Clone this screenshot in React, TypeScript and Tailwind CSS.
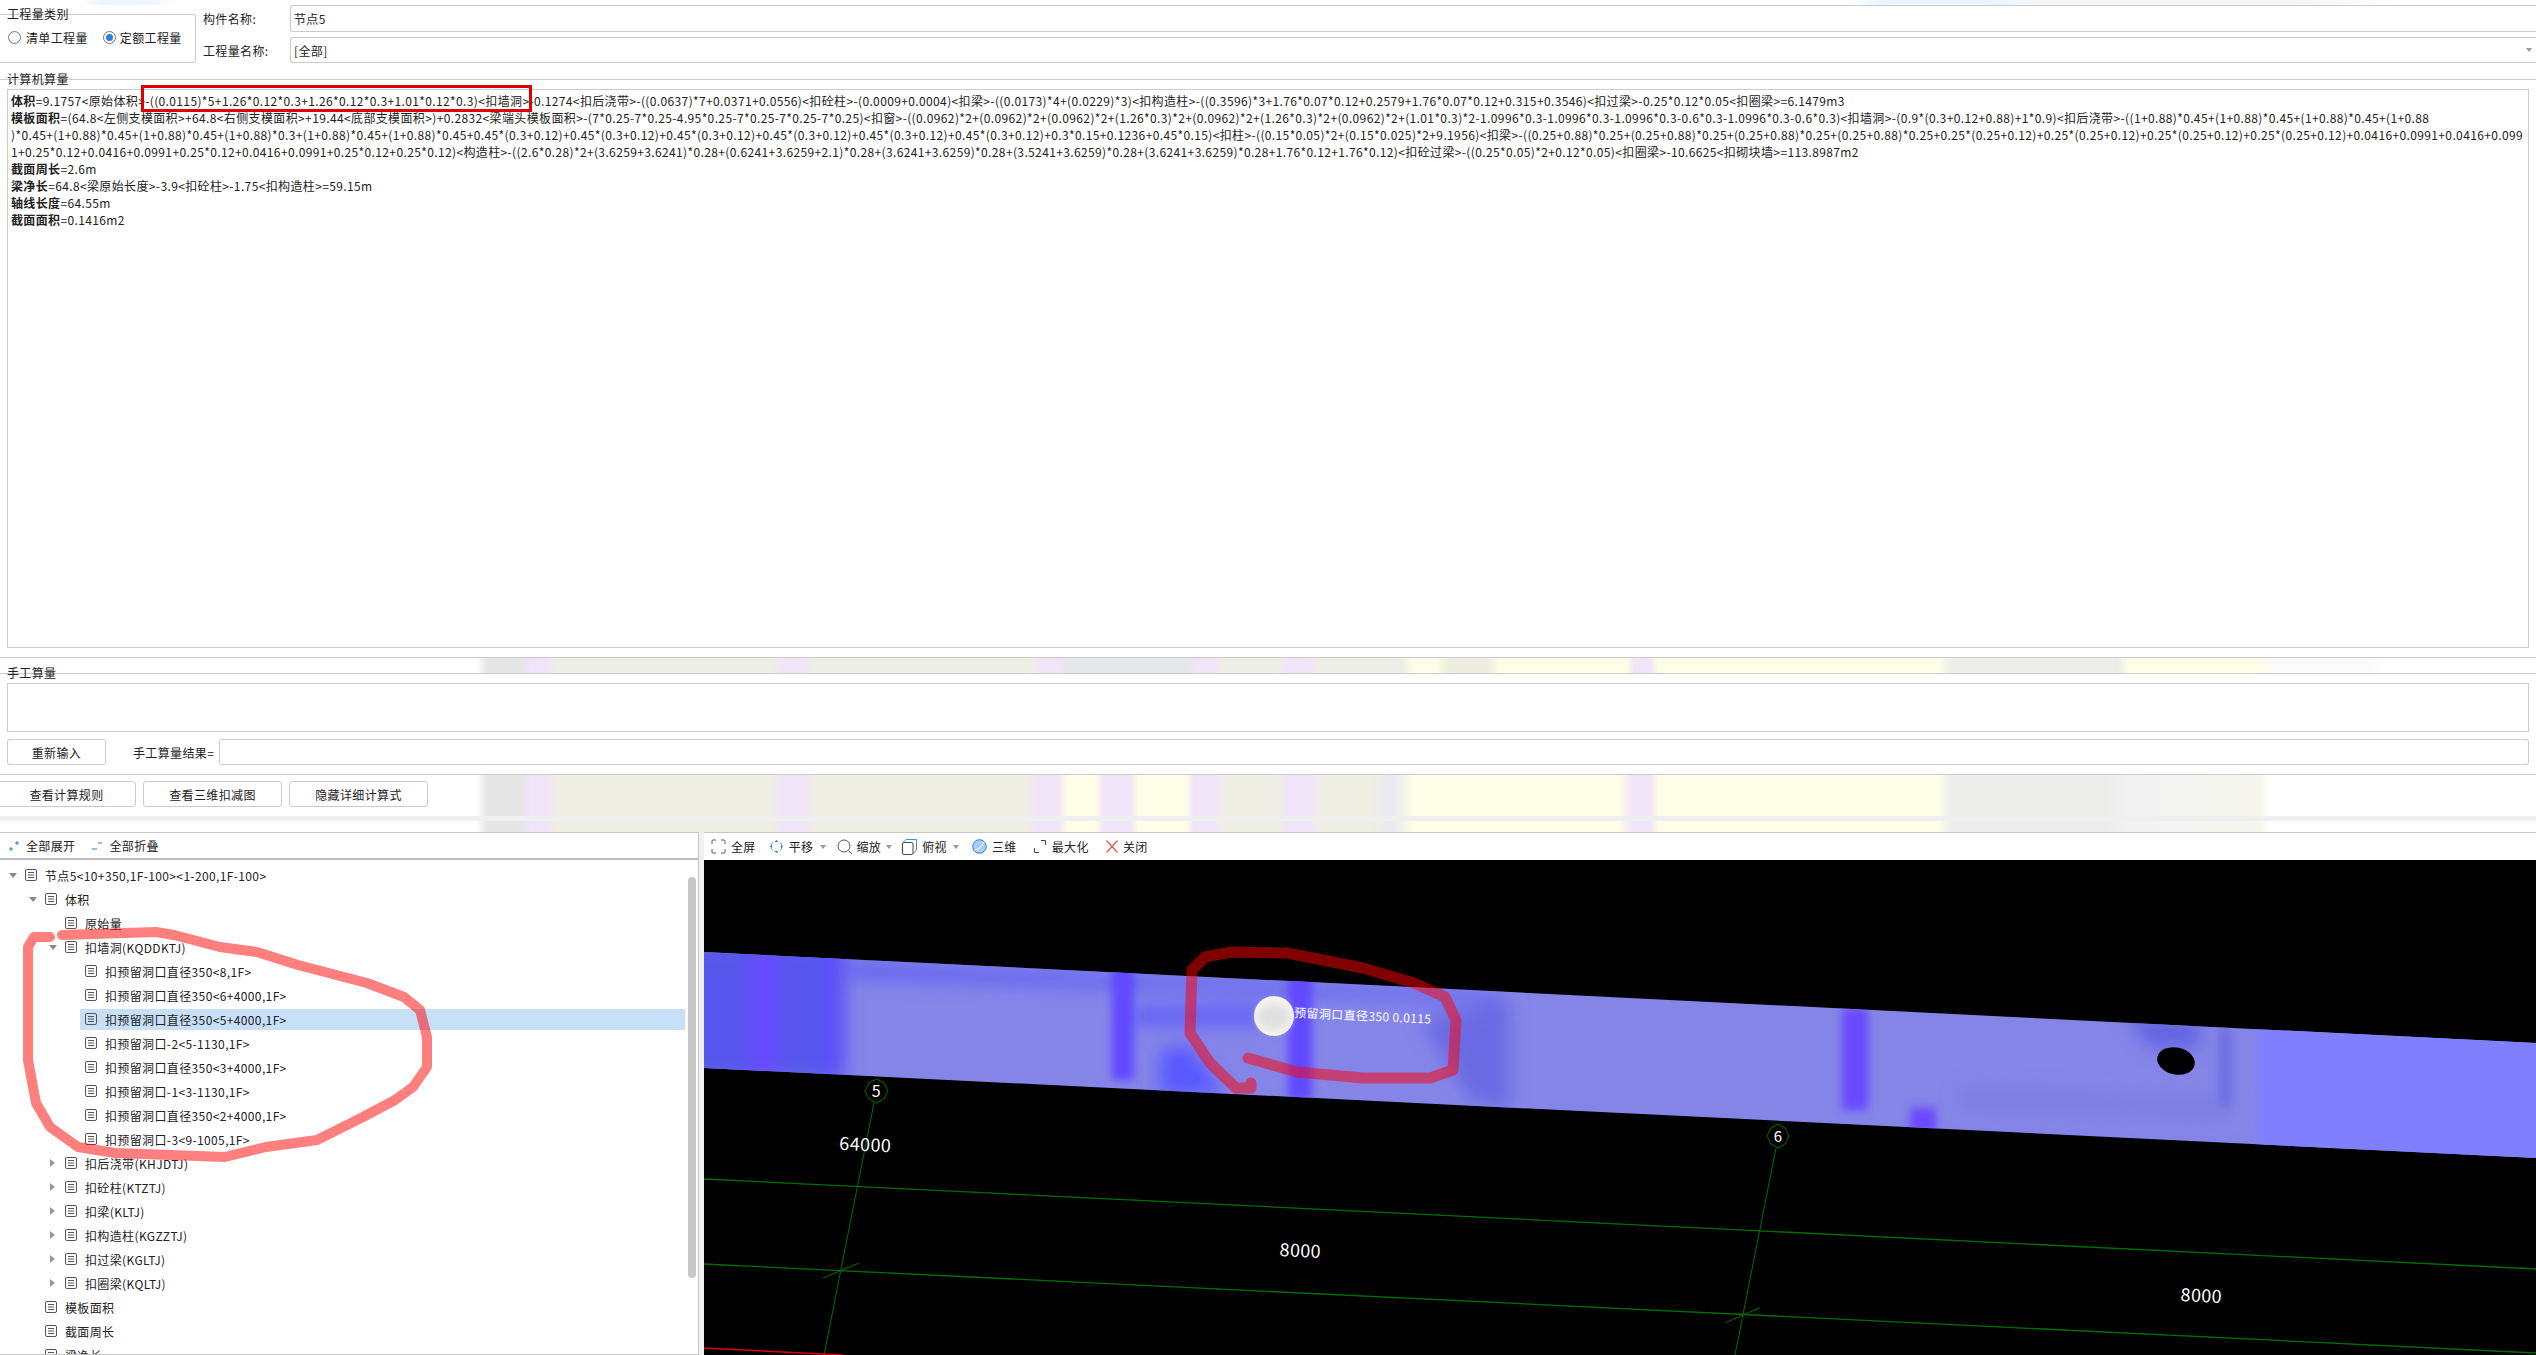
import React from "react";

const LINES: [string, string][] = [
  ["体积", "=9.1757<原始体积>-((0.0115)*5+1.26*0.12*0.3+1.26*0.12*0.3+1.01*0.12*0.3)<扣墙洞>-0.1274<扣后浇带>-((0.0637)*7+0.0371+0.0556)<扣砼柱>-(0.0009+0.0004)<扣梁>-((0.0173)*4+(0.0229)*3)<扣构造柱>-((0.3596)*3+1.76*0.07*0.12+0.2579+1.76*0.07*0.12+0.315+0.3546)<扣过梁>-0.25*0.12*0.05<扣圈梁>=6.1479m3"],
  ["模板面积", "=(64.8<左侧支模面积>+64.8<右侧支模面积>+19.44<底部支模面积>)+0.2832<梁端头模板面积>-(7*0.25-7*0.25-4.95*0.25-7*0.25-7*0.25-7*0.25)<扣窗>-((0.0962)*2+(0.0962)*2+(0.0962)*2+(1.26*0.3)*2+(0.0962)*2+(1.26*0.3)*2+(0.0962)*2+(1.01*0.3)*2-1.0996*0.3-1.0996*0.3-1.0996*0.3-0.6*0.3-1.0996*0.3-0.6*0.3)<扣墙洞>-(0.9*(0.3+0.12+0.88)+1*0.9)<扣后浇带>-((1+0.88)*0.45+(1+0.88)*0.45+(1+0.88)*0.45+(1+0.88"],
  ["", ")*0.45+(1+0.88)*0.45+(1+0.88)*0.45+(1+0.88)*0.3+(1+0.88)*0.45+(1+0.88)*0.45+0.45*(0.3+0.12)+0.45*(0.3+0.12)+0.45*(0.3+0.12)+0.45*(0.3+0.12)+0.45*(0.3+0.12)+0.45*(0.3+0.12)+0.3*0.15+0.1236+0.45*0.15)<扣柱>-((0.15*0.05)*2+(0.15*0.025)*2+9.1956)<扣梁>-((0.25+0.88)*0.25+(0.25+0.88)*0.25+(0.25+0.88)*0.25+(0.25+0.88)*0.25+0.25*(0.25+0.12)+0.25*(0.25+0.12)+0.25*(0.25+0.12)+0.25*(0.25+0.12)+0.0416+0.0991+0.0416+0.099"],
  ["", "1+0.25*0.12+0.0416+0.0991+0.25*0.12+0.0416+0.0991+0.25*0.12+0.25*0.12)<构造柱>-((2.6*0.28)*2+(3.6259+3.6241)*0.28+(0.6241+3.6259+2.1)*0.28+(3.6241+3.6259)*0.28+(3.5241+3.6259)*0.28+(3.6241+3.6259)*0.28+1.76*0.12+1.76*0.12)<扣砼过梁>-((0.25*0.05)*2+0.12*0.05)<扣圈梁>-10.6625<扣砌块墙>=113.8987m2"],
  ["截面周长", "=2.6m"],
  ["梁净长", "=64.8<梁原始长度>-3.9<扣砼柱>-1.75<扣构造柱>=59.15m"],
  ["轴线长度", "=64.55m"],
  ["截面面积", "=0.1416m2"],
];

type Row = { level: 0 | 1 | 2 | 3; text: string; arrow?: "down" | "right"; selected?: boolean };
const ROWS: Row[] = [
  { level: 0, text: "节点5<10+350,1F-100><1-200,1F-100>", arrow: "down" },
  { level: 1, text: "体积", arrow: "down" },
  { level: 2, text: "原始量" },
  { level: 2, text: "扣墙洞(KQDDKTJ)", arrow: "down" },
  { level: 3, text: "扣预留洞口直径350<8,1F>" },
  { level: 3, text: "扣预留洞口直径350<6+4000,1F>" },
  { level: 3, text: "扣预留洞口直径350<5+4000,1F>", selected: true },
  { level: 3, text: "扣预留洞口-2<5-1130,1F>" },
  { level: 3, text: "扣预留洞口直径350<3+4000,1F>" },
  { level: 3, text: "扣预留洞口-1<3-1130,1F>" },
  { level: 3, text: "扣预留洞口直径350<2+4000,1F>" },
  { level: 3, text: "扣预留洞口-3<9-1005,1F>" },
  { level: 2, text: "扣后浇带(KHJDTJ)", arrow: "right" },
  { level: 2, text: "扣砼柱(KTZTJ)", arrow: "right" },
  { level: 2, text: "扣梁(KLTJ)", arrow: "right" },
  { level: 2, text: "扣构造柱(KGZZTJ)", arrow: "right" },
  { level: 2, text: "扣过梁(KGLTJ)", arrow: "right" },
  { level: 2, text: "扣圈梁(KQLTJ)", arrow: "right" },
  { level: 1, text: "模板面积" },
  { level: 1, text: "截面周长" },
  { level: 1, text: "梁净长" },
];
const INDENT = { 0: "pl-[9px]", 1: "pl-[29px]", 2: "pl-[49px]", 3: "pl-[69px]" };

const DocIcon = () => (
  <svg width="12" height="12" viewBox="0 0 12 12" className="shrink-0" fill="none" stroke="#555">
    <rect x="0.5" y="0.5" width="11" height="11" rx="1.5" />
    <path d="M3 3.5h6M3 6h6M3 8.5h6" />
  </svg>
);

const Arrow = ({ dir }: { dir?: "down" | "right" }) => (
  <span className="w-[11px] shrink-0 flex items-center justify-start">
    {dir === "down" && (
      <svg width="8" height="5" viewBox="0 0 8 5"><path d="M0 0h8L4 5z" fill="#888" /></svg>
    )}
    {dir === "right" && (
      <svg width="5" height="8" viewBox="0 0 5 8" className="ml-[1px]"><path d="M0 0l5 4-5 4z" fill="#999" /></svg>
    )}
  </span>
);

const Caret = () => (
  <svg width="6" height="4" viewBox="0 0 6 4" className="shrink-0"><path d="M0 0h6L3 4z" fill="#999" /></svg>
);

const Btn = ({ children, className }: { children: React.ReactNode; className: string }) => (
  <div className={"h-[26px] border border-[#ccc] rounded-[3px] bg-white flex items-center justify-center shrink-0 " + className}>
    {children}
  </div>
);

const strip1 =
  "bg-[linear-gradient(90deg,#fff_476px,#e5e5e5_488px,#e5e5e5_520px,#f0e4f8_532px,#f0e4f8_546px,#eeeee4_556px,#eeeee4_772px,#f0e4f8_784px,#f0e4f8_804px,#eeeee4_814px,#eeeee4_1030px,#f0e4f8_1042px,#f0e4f8_1058px,#e6e8ec_1070px,#e6e8ec_1186px,#f0e4f8_1198px,#f0e4f8_1214px,#eeeee4_1224px,#eeeee4_1278px,#f0e4f8_1288px,#f0e4f8_1310px,#eeeee4_1320px,#eeeee4_1402px,#fdfde8_1414px,#fdfde8_1436px,#ececdf_1450px,#ececdf_1486px,#fdfde8_1500px,#fdfde8_1626px,#f0e4f8_1635px,#f0e4f8_1650px,#fdfde8_1658px,#fdfde8_1940px,#ececea_1952px,#ececea_2118px,#fdfde8_2128px,#fdfde8_2260px,#fbfbfb_2274px,#fbfbfb_2370px,#fff_2390px)]";
const strip2 =
  "bg-[linear-gradient(90deg,#fff_476px,#e5e5e5_488px,#e5e5e5_520px,#f0e4f8_532px,#f0e4f8_546px,#eeeee4_556px,#eeeee4_772px,#f0e4f8_784px,#f0e4f8_804px,#eeeee4_814px,#eeeee4_1028px,#f0e4f8_1036px,#f0e4f8_1058px,#fdfde8_1068px,#fdfde8_1096px,#f0e4f8_1104px,#f0e4f8_1130px,#fdfde8_1138px,#fdfde8_1186px,#f0e4f8_1194px,#f0e4f8_1214px,#eeeee4_1224px,#eeeee4_1278px,#f0e4f8_1288px,#f0e4f8_1310px,#eeeee4_1320px,#eeeee4_1368px,#e9e9f0_1392px,#fdfde8_1414px,#fdfde8_1620px,#f0e4f8_1633px,#f0e4f8_1650px,#fdfde8_1658px,#fdfde8_1940px,#ececea_1952px,#ececea_2108px,#f2f2f4_2128px,#f6f6ee_2260px,#fff_2270px)]";
const stripTop =
  "bg-[linear-gradient(90deg,#fff_80px,#eef5fd_100px,#eef5fd_150px,#fff_175px,#fff_1850px,#eaf4fe_1880px,#eaf4fe_1990px,#f4f6f8_2040px,#f6f6f6_2300px,#fff_2400px)]";

const Canvas = () => (
  <svg className="w-full h-full block" viewBox="704 860 1832 495" preserveAspectRatio="none">
    <defs>
      <clipPath id="beam"><polygon points="704,952 2536,1043 2536,1158 704,1068" /></clipPath>
      <filter id="b9" x="-60%" y="-60%" width="220%" height="220%"><feGaussianBlur stdDeviation="9" /></filter>
      <filter id="b3" x="-50%" y="-50%" width="200%" height="200%"><feGaussianBlur stdDeviation="4" /></filter>
    </defs>
    <rect x="704" y="860" width="1832" height="495" fill="#000" />
    <g clipPath="url(#beam)">
      <rect x="704" y="940" width="1832" height="230" fill="#8585e8" />
      <g filter="url(#b9)">
        <rect x="680" y="940" width="165" height="140" fill="#5656ec" />
        <rect x="752" y="940" width="24" height="140" fill="#6848ff" />
        <rect x="820" y="940" width="25" height="140" fill="#5c50f6" />
        <polygon points="850,962 1500,995 1500,1003 850,978" fill="#6262f2" />
        <rect x="1134" y="1007" width="140" height="18" fill="#5f5ffa" />
        <polygon points="1160,1050 1190,1045 1225,1095 1160,1095" fill="#5858ff" />
        <polygon points="1420,1020 1510,1000 1510,1110 1470,1100" fill="#6a6ae4" />
        <polygon points="2125,1015 2200,1020 2200,1048 2150,1048" fill="#6464e2" />
        <polygon points="1960,1088 2230,1098 2230,1118 1960,1108" fill="#7e7ee2" />
      </g>
      <g filter="url(#b3)">
        <rect x="1112" y="960" width="22" height="120" fill="#6048ff" />
        <rect x="1288" y="975" width="24" height="125" fill="#6048ff" />
        <rect x="1842" y="1008" width="26" height="102" fill="#6a4aff" />
        <rect x="1910" y="1108" width="26" height="24" fill="#6a4aff" />
        <rect x="2218" y="1027" width="14" height="80" fill="#7070e2" />
        <rect x="2258" y="1000" width="290" height="200" fill="#8080ff" />
      </g>
    </g>
    <ellipse cx="2176" cy="1061" rx="19" ry="13.5" fill="#000" transform="rotate(12 2176 1061)" />
    <ellipse cx="1274" cy="1016" rx="20" ry="20" fill="#f5f5ea" />
    <ellipse cx="1274" cy="1017" rx="17" ry="13" fill="#e0e0e2" filter="url(#b3)" />
    <text x="1294" y="1017" fill="#fff" fontSize="12" transform="rotate(2.8 1294 1017)">预留洞口直径350 0.0115</text>

    <g fill="none" stroke="#007000" strokeWidth="1">
      <path d="M874 1103L824 1355" />
      <path d="M1776 1148L1735 1355" />
      <path d="M704 1179L2536 1269" strokeWidth="1.3" />
      <path d="M704 1264L2536 1353" strokeWidth="1.3" />
      <path d="M823 1278L859 1263" />
      <path d="M1725 1323L1759 1308" />
      <polygon points="876.5,1079 884,1083 888,1091 884,1099 876.5,1103 869,1099 865,1091 869,1083" />
      <polygon points="1778,1124 1785,1128 1789,1136 1785,1144 1778,1148 1771,1144 1767,1136 1771,1128" />
    </g>
    <path d="M704 1348L843 1355" stroke="#e00000" strokeWidth="1.5" />
    <g fill="#fff" textAnchor="middle">
      <text x="876.5" y="1097" fontSize="16">5</text>
      <text x="1778" y="1142" fontSize="15">6</text>
      <text x="865" y="1151" fontSize="18" transform="rotate(2.8 865 1151)">64000</text>
      <text x="1300" y="1257" fontSize="18" transform="rotate(2.8 1300 1257)">8000</text>
      <text x="2201" y="1302" fontSize="18" transform="rotate(2.8 2201 1302)">8000</text>
    </g>
    <path
      d="M1248 1058L1297 1072L1363 1078L1430 1078L1453 1070L1456 1020L1445 997L1414 983L1363 968L1287 953L1231 952L1205 957L1192 970L1190 1033L1210 1063L1236 1088L1251 1088L1251 1083"
      fill="none" stroke="#ff0000" strokeOpacity="0.5" strokeWidth="11" strokeLinecap="round" strokeLinejoin="round"
    />
  </svg>
);

export default function App() {
  return (
    <div className="relative w-[2536px] h-[1355px] overflow-hidden bg-white text-[#222] text-[12px] leading-[17px] tracking-[0.37px] font-['Noto_Sans_CJK_SC','Microsoft_YaHei',sans-serif]">
      {/* header */}
      <div className={"h-[5px] " + stripTop} />
      <div className="h-[74px] flex">
        <div className="w-[196px] shrink-0 pt-[9px]">
          <div className="h-[49px] border border-l-0 border-[#ccc] rounded-r-[3px]">
            <div className="-mt-[10px] ml-[7px] h-[17px]">工程量类别</div>
            <div className="flex items-center mt-[7px] pl-[8px]">
              <span className="w-[13px] h-[13px] rounded-full border border-[#777]" />
              <span className="ml-[5px]">清单工程量</span>
              <span className="ml-[15px] w-[13px] h-[13px] rounded-full border border-[#777] flex items-center justify-center">
                <span className="w-[7px] h-[7px] rounded-full bg-[#2f7fd8]" />
              </span>
              <span className="ml-[4px]">定额工程量</span>
            </div>
          </div>
        </div>
        <div className="flex-1 flex flex-col gap-[5px]">
          <div className="flex items-center h-[27px]">
            <div className="w-[94px] pl-[7px] shrink-0">构件名称:</div>
            <div className="flex-1 h-full border-y border-l border-[#ccc] rounded-l-[3px] pl-[3px] flex items-center">节点5</div>
          </div>
          <div className="flex items-center h-[26px]">
            <div className="w-[94px] pl-[7px] shrink-0">工程量名称:</div>
            <div className="flex-1 h-full border-y border-l border-[#ccc] rounded-l-[3px] pl-[3px] flex items-center justify-between pr-[4px]">
              <span>[全部]</span>
              <Caret />
            </div>
          </div>
        </div>
      </div>

      {/* computer quantity */}
      <div className="h-[578px] border-t border-[#ccc] px-[7px]">
        <div className="-mt-[10px] h-[18px]">计算机算量</div>
        <div className="mt-[1px] h-[559px] w-[2522px] border border-[#ccc] pl-[3px] pt-[2px] overflow-hidden">
          {LINES.map(([b, t], i) => (
            <div key={i} className="whitespace-nowrap h-[17px]">
              {b && <span className="font-bold">{b}</span>}
              {t}
            </div>
          ))}
        </div>
      </div>

      <div className={"h-[17px] border-y border-[#ccc] " + strip1} />

      {/* manual quantity */}
      <div className="h-[100px] px-[7px] flow-root">
        <div className="-mt-[10px] h-[16px]">手工算量</div>
        <div className="mt-[3px] h-[49px] w-[2522px] border border-[#ccc]" />
        <div className="mt-[7px] flex items-center">
          <Btn className="w-[99px]">重新输入</Btn>
          <div className="ml-[27px] w-[86px] whitespace-nowrap">手工算量结果=</div>
          <div className="h-[26px] w-[2310px] border border-[#ccc] rounded-[3px]" />
        </div>
      </div>

      {/* action buttons */}
      <div className={"h-[42px] border-t border-[#ccc] pt-[6px] flex gap-[7px] " + strip2}>
        <Btn className="w-[139px] -ml-[3px]">查看计算规则</Btn>
        <Btn className="w-[139px]">查看三维扣减图</Btn>
        <Btn className="w-[139px]">隐藏详细计算式</Btn>
      </div>
      <div className="h-[5px] bg-[#efefef]" />
      <div className={"h-[11px] " + strip2} />

      {/* lower panels */}
      <div className="h-[523px] flex bg-[#f0f0f0]">
        <div className="w-[699px] shrink-0 bg-white border-t border-r border-b border-[#c5c5cc] flex flex-col">
          <div className="h-[27px] shrink-0 border-b-[2px] border-[#bcbcc0] flex items-center">
            <svg width="10" height="12" viewBox="0 0 10 12" className="ml-[9px]" fill="none">
              <path d="M6 3h4M8 1v4" stroke="#2b7de0" /><path d="M0 9h4M2 7v4" stroke="#2b7de0" />
            </svg>
            <span className="ml-[7px]">全部展开</span>
            <svg width="10" height="12" viewBox="0 0 10 12" className="ml-[17px]" fill="none">
              <path d="M6 3h4" stroke="#2b7de0" /><path d="M0 9h5" stroke="#2b7de0" />
            </svg>
            <span className="ml-[7px]">全部折叠</span>
          </div>
          <div className="relative flex-1 overflow-hidden pt-[3px]">
            {ROWS.map((r, i) => (
              <div key={i} className={"h-[24px] flex items-center " + INDENT[r.level]}>
                <Arrow dir={r.arrow} />
                <div className={"flex-1 mr-[13px] h-[21px] flex items-center pl-[5px] whitespace-nowrap " + (r.selected ? "bg-[#c8dff8]" : "")}>
                  <DocIcon />
                  <span className="ml-[8px]">{r.text}</span>
                </div>
              </div>
            ))}
            <div className="absolute left-[688px] top-[17px] w-[8px] h-[401px] rounded-full bg-[#c8c8c8]" />
          </div>
        </div>
        <div className="ml-[5px] flex-1 flex flex-col bg-white border-t border-[#c5c5cc]">
          <div className="h-[27px] shrink-0 flex items-center pl-[7px] whitespace-nowrap">
            <svg width="15" height="15" viewBox="0 0 15 15" fill="none" stroke="#555">
              <path d="M1 5V2q0-1 1-1h3M10 1h3q1 0 1 1v3M14 10v3q0 1-1 1h-3M5 14H2q-1 0-1-1v-3" />
            </svg>
            <span className="ml-[5px]">全屏</span>
            <svg width="15" height="15" viewBox="0 0 15 15" className="ml-[13px]" fill="none" stroke="#2b7de0">
              <path d="M7.5 1L5.5 3h4zM7.5 14l-2-2h4zM1 7.5l2-2v4zM14 7.5l-2-2v4z" fill="#2b7de0" stroke="none" />
              <path d="M4 3.500Q2.500 4.500 2 6M11 3.500q1.500 1 2 2.500M4 11.500Q2.500 10.500 2 9M11 11.500q1.500-1 2-2.500" strokeWidth="0.8" />
            </svg>
            <span className="ml-[5px]">平移</span>
            <span className="ml-[6px]"><Caret /></span>
            <svg width="16" height="16" viewBox="0 0 16 16" className="ml-[11px]" fill="none" stroke="#555">
              <ellipse cx="7" cy="7" rx="6" ry="6" /><path d="M11.500 11.500L15 15" />
            </svg>
            <span className="ml-[4px]">缩放</span>
            <span className="ml-[5px]"><Caret /></span>
            <svg width="15" height="16" viewBox="0 0 15 16" className="ml-[10px]" fill="none" stroke="#444">
              <rect x="0.500" y="3.500" width="10.500" height="12" rx="1.500" /><path d="M1 3.500L4 0.500h10.500v10.500L11 15" stroke="#4a90d9" />
            </svg>
            <span className="ml-[5px]">俯视</span>
            <span className="ml-[6px]"><Caret /></span>
            <svg width="15" height="15" viewBox="0 0 15 15" className="ml-[13px]">
              <circle cx="7.500" cy="7.500" r="6.800" fill="#a8cdf5" stroke="#2b7de0" />
              <path d="M3 11Q9 10 12 3" fill="none" stroke="#fff" />
            </svg>
            <span className="ml-[5px]">三维</span>
            <svg width="12" height="13" viewBox="0 0 12 13" className="ml-[17px]" fill="none" stroke="#444">
              <path d="M7 0.500h4.500V5M5 12.500H0.500V8" />
            </svg>
            <span className="ml-[6px]">最大化</span>
            <svg width="12" height="13" viewBox="0 0 12 13" className="ml-[17px]" fill="none" stroke="#e8504f" strokeWidth="1.200">
              <path d="M0.500 0.500L11.500 12.500M11.500 0.500L0.500 12.500" />
            </svg>
            <span className="ml-[5px]">关闭</span>
          </div>
          <div className="flex-1 min-h-0"><Canvas /></div>
        </div>
      </div>

      {/* hand-drawn annotations over the page */}
      <div className="absolute left-[141px] top-[85px] w-[391px] h-[27px] border-[3px] border-[#e00000]" />
      <svg className="absolute left-0 top-0 pointer-events-none" width="2536" height="1355" viewBox="0 0 2536 1355">
        <path
          d="M50 937L34 937L28 947L28 1060L36 1103L50 1127L78 1147L115 1153L225 1157L266 1147L317 1140L363 1117L395 1100L413 1087L427 1067L427 1037L420 1010L404 997L367 983L298 965L257 952L220 947L174 935L156 932L62 935"
          fill="none" stroke="#ff0000" strokeOpacity="0.5" strokeWidth="10" strokeLinecap="round" strokeLinejoin="round"
        />
      </svg>
    </div>
  );
}
